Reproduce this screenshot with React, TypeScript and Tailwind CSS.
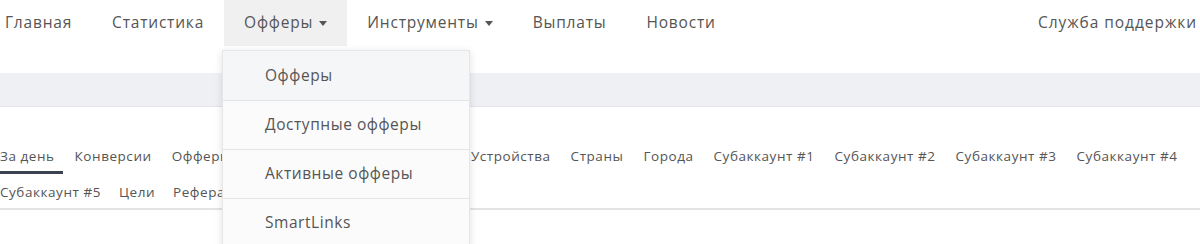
import React from "react";

const navItems = [
  { label: "Главная" },
  { label: "Статистика" },
  { label: "Офферы", caret: true, active: true },
  { label: "Инструменты", caret: true },
  { label: "Выплаты" },
  { label: "Новости" },
];

const tabsRow1 = [
  "За день",
  "Конверсии",
  "Офферы",
  "Прелендинги",
  "Источники",
  "Устройства",
  "Страны",
  "Города",
  "Субаккаунт #1",
  "Субаккаунт #2",
  "Субаккаунт #3",
  "Субаккаунт #4",
];

const tabsRow2 = ["Субаккаунт #5", "Цели", "Рефералы"];

const menuItems = ["Офферы", "Доступные офферы", "Активные офферы", "SmartLinks"];

function Caret() {
  return (
    <svg width="8" height="5" viewBox="0 0 8 5" className="ml-[6px] inline-block">
      <path d="M0 0 L8 0 L4 5 Z" fill="#555" />
    </svg>
  );
}

export default function App() {
  return (
    <div
      className="relative w-[1200px] h-[244px] overflow-hidden bg-white text-[#555]"
      style={{ fontFamily: '"Open Sans", "Noto Sans", sans-serif' }}
    >
      {/* top nav */}
      <div className="flex h-[46px] items-stretch justify-between">
        <ul className="flex -ml-[15px]">
          {navItems.map((item) => (
            <li
              key={item.label}
              className={`flex items-center px-5 text-[15.5px] tracking-[0.8px] ${item.active ? "bg-[#f0f0f0]" : ""}`}
            >
              {item.label}
              {item.caret && <Caret />}
            </li>
          ))}
        </ul>
        <div className="flex items-center pr-[3px] text-[15.5px] tracking-[0.95px]">Служба поддержки</div>
      </div>

      {/* gray band */}
      <div className="mt-[27px] h-[34px] bg-[#eef0f3] border-b border-[#e2e4e7]" />

      {/* tabs */}
      <div className="mt-[31px] border-b-2 border-[#e3e3e3]">
        <ul className="flex -ml-2 h-[36px]">
          {tabsRow1.map((t, i) => (
            <li
              key={t}
              className={`flex items-center px-2 text-[13.5px] tracking-[0.55px] ${
                i === 0 ? "border-b-[3px] border-[#3b4350] pt-[3px]" : ""
              } ${i === 4 ? "mr-[12px]" : "mr-1"}`}
            >
              {t}
            </li>
          ))}
        </ul>
        <ul className="flex -ml-2 h-[34px] pt-[2px]">
          {tabsRow2.map((t) => (
            <li key={t} className="mr-[2px] flex items-center px-2 text-[13.5px] tracking-[0.55px]">
              {t}
            </li>
          ))}
        </ul>
      </div>

      {/* dropdown */}
      <div className="absolute left-[222px] top-[50px] w-[248px] bg-[#fbfbfb] border border-[#e6e6e6] shadow-[0_2px_8px_rgba(0,0,0,0.12)]">
        {menuItems.map((m, i) => (
          <div
            key={m}
            className={`flex h-[49px] items-center pl-[42px] text-[15.5px] tracking-[0.55px] ${
              i > 0 ? "border-t border-[#e4e4e4]" : ""
            } ${i === 0 ? "bg-[#f5f6f7]" : ""}`}
          >
            {m}
          </div>
        ))}
      </div>
    </div>
  );
}
